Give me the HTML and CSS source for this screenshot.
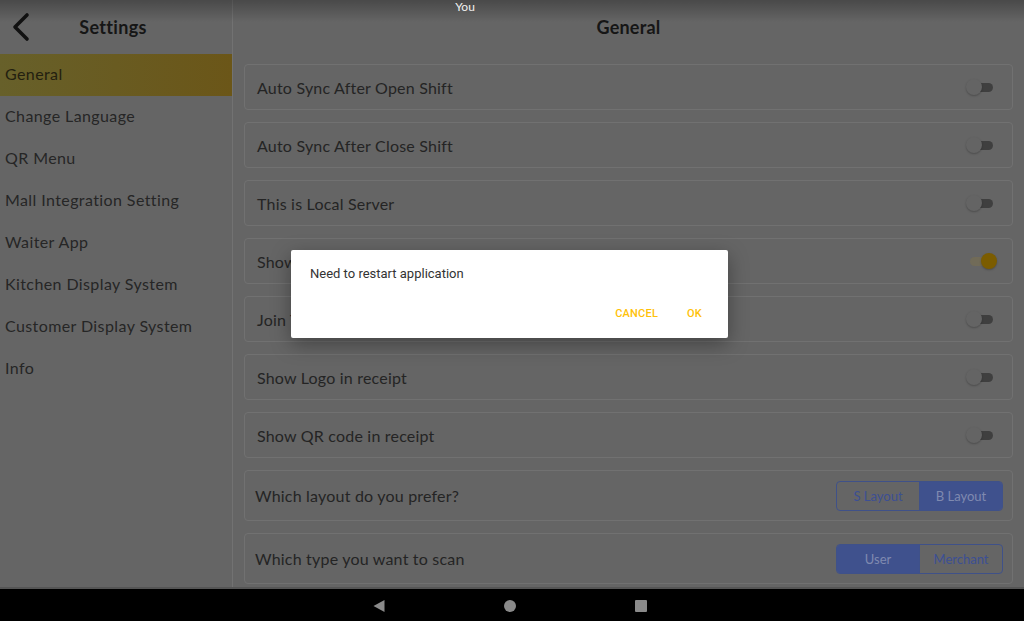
FILE: index.html
```html
<!DOCTYPE html>
<html>
<head>
<meta charset="utf-8">
<link rel="stylesheet" href="styles.css">
</head>
<body>
<div class="screen">
  <div class="app">
    <aside class="sidebar">
      <div class="side-head">
        <svg class="back" width="24" height="30" viewBox="0 0 24 30"><path d="M17 3 L5 15 L17 27" fill="none" stroke="#111" stroke-width="3.6" stroke-linecap="round" stroke-linejoin="round"/></svg>
        <span class="side-title">Settings</span>
      </div>
      <ul class="menu">
        <li class="menu-item active">General</li>
        <li class="menu-item">Change Language</li>
        <li class="menu-item">QR Menu</li>
        <li class="menu-item">Mall Integration Setting</li>
        <li class="menu-item">Waiter App</li>
        <li class="menu-item">Kitchen Display System</li>
        <li class="menu-item">Customer Display System</li>
        <li class="menu-item">Info</li>
      </ul>
    </aside>
    <main class="main">
      <div class="main-head">General</div>
      <div class="list">
        <div class="card"><span class="label">Auto Sync After Open Shift</span><span class="switch"><span class="track"></span><span class="thumb"></span></span></div>
        <div class="card"><span class="label">Auto Sync After Close Shift</span><span class="switch"><span class="track"></span><span class="thumb"></span></span></div>
        <div class="card"><span class="label">This is Local Server</span><span class="switch"><span class="track"></span><span class="thumb"></span></span></div>
        <div class="card"><span class="label">Show Order Number</span><span class="switch on"><span class="track"></span><span class="thumb"></span></span></div>
        <div class="card"><span class="label">Join Table</span><span class="switch"><span class="track"></span><span class="thumb"></span></span></div>
        <div class="card"><span class="label">Show Logo in receipt</span><span class="switch"><span class="track"></span><span class="thumb"></span></span></div>
        <div class="card"><span class="label">Show QR code in receipt</span><span class="switch"><span class="track"></span><span class="thumb"></span></span></div>
        <div class="card tall"><span class="label q">Which layout do you prefer?</span>
          <span class="seg"><span class="seg-btn">S Layout</span><span class="seg-btn sel">B Layout</span></span></div>
        <div class="card tall"><span class="label q">Which type you want to scan</span>
          <span class="seg"><span class="seg-btn sel">User</span><span class="seg-btn">Merchant</span></span></div>
      </div>
    </main>
  </div>
  <nav class="navbar">
    <svg width="14" height="14" viewBox="0 0 14 14"><path d="M12.5 1 L1.5 7 L12.5 13 Z" fill="#8a8a8a"/></svg>
    <svg width="14" height="14" viewBox="0 0 14 14"><circle cx="7" cy="7" r="6" fill="#8a8a8a"/></svg>
    <svg width="14" height="14" viewBox="0 0 14 14"><rect x="1" y="1" width="12" height="12" rx="1" fill="#8a8a8a"/></svg>
  </nav>
  <div class="statusbar"><span class="you">You</span></div>
  <div class="dialog">
    <p class="msg">Need to restart application</p>
    <div class="actions"><span class="btn">CANCEL</span><span class="btn">OK</span></div>
  </div>
</div>
</body>
</html>
```
FILE: styles.css
```css
* { box-sizing: border-box; }
html, body { margin: 0; padding: 0; }
body { width: 1024px; height: 621px; overflow: hidden; background: #656565; font-family: "Lato", "Open Sans", sans-serif; }
.screen { position: relative; width: 1024px; height: 621px; display: flex; flex-direction: column; }
.app { display: flex; height: 587px; background: #656565; }
.sidebar { width: 233px; border-right: 1px solid #727272; flex-shrink: 0; }
.side-head { height: 54px; display: flex; align-items: center; padding-left: 10px; position: relative; }
.back { flex-shrink: 0; }
.side-title { position: absolute; left: 0; right: 6px; text-align: center; font-weight: 700; font-size: 18px; letter-spacing: 0.3px; color: #161616; pointer-events: none; }
.menu { list-style: none; margin: 0; padding: 0; }
.menu-item { height: 42px; line-height: 40px; padding-left: 5px; font-size: 16px; color: #262626; letter-spacing: 0.4px; }
.menu-item.active { background: linear-gradient(90deg, #67602a 0%, #6b5618 100%); color: #232010; }
.main { flex: 1; display: flex; flex-direction: column; }
.main-head { height: 54px; display: flex; align-items: center; justify-content: center; font-weight: 700; font-size: 18px; letter-spacing: 0.2px; color: #161616; }
.list { padding: 10px 11px 0 11px; display: flex; flex-direction: column; gap: 12px; }
.card { height: 46px; border: 1px solid #717171; border-radius: 4px; display: flex; align-items: center; justify-content: space-between; padding: 0 15px 0 12px; }
.card.tall { height: 51px; padding: 0 9px 0 10px; }
.label { font-size: 16px; color: #242424; letter-spacing: 0.2px; }
.switch { position: relative; width: 31px; height: 16px; }
.track { position: absolute; left: 4px; right: 4px; top: 3.5px; height: 9px; border-radius: 5px; background: #3f3f3f; }
.thumb { position: absolute; left: 0; top: 0; width: 16px; height: 16px; border-radius: 50%; background: #646464; box-shadow: 0 1px 2px rgba(0,0,0,0.25); }
.switch.on .track { background: #716b58; }
.switch.on .thumb { left: auto; right: 0; background: #7b5c00; }
.seg { display: flex; width: 167px; height: 30px; border: 1px solid #3f5189; border-radius: 4px; overflow: hidden; }
.seg-btn { flex: 1; display: flex; align-items: center; justify-content: center; font-size: 13px; color: #3c4f94; }
.seg-btn + .seg-btn { border-left: 1px solid #3f5189; }
.seg-btn.sel { background: #3f518d; color: #7f8ab0; }
.navbar { height: 34px; background: #000; border-top: 2px solid #555; display: flex; align-items: center; justify-content: center; gap: 117px; padding-right: 4px; padding-top: 2px; }
.statusbar { position: absolute; left: 0; top: 0; width: 100%; height: 22px; background: linear-gradient(180deg, rgba(0,0,0,0.28), rgba(0,0,0,0)); display: flex; justify-content: center; }
.you { font-family: "Lato", sans-serif; font-size: 12px; color: #f0f0f0; margin-left: -94px; line-height: 13px; }
.dialog { position: absolute; left: 291px; top: 250px; width: 437px; height: 88px; background: #fff; border-radius: 2px; box-shadow: 0 6px 20px rgba(0,0,0,0.35); font-family: "Roboto", sans-serif; padding: 16px 19px 0 19px; }
.msg { margin: 0; font-size: 13px; color: #333; line-height: 16px; }
.actions { display: flex; justify-content: flex-end; gap: 29px; margin-top: 25px; padding-right: 7px; }
.btn { font-weight: 500; font-size: 11px; color: #ffc107; letter-spacing: 0.2px; }
```
